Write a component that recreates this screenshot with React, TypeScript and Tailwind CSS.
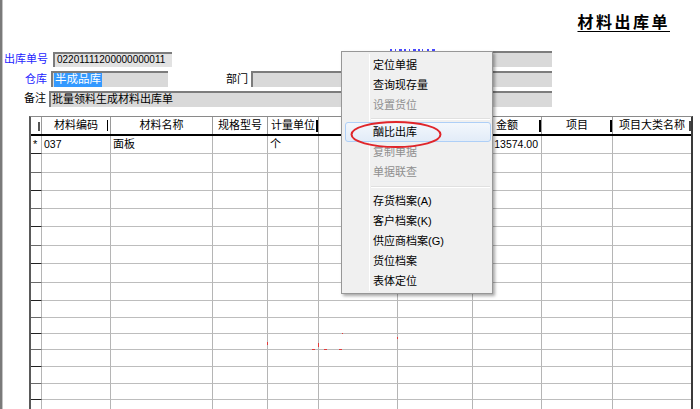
import React from 'react'

const FONT = "[font-family:'Liberation_Sans','Noto_Sans_CJK_SC',sans-serif]"

interface HeaderCell {
  text: string
  bar?: 'thin' | 'thick'
  align?: 'center' | 'left'
}

const headers: HeaderCell[] = [
  { text: '' },
  { text: '材料编码', bar: 'thin' },
  { text: '材料名称' },
  { text: '规格型号' },
  { text: '计量单位', bar: 'thick' },
  { text: '数量' },
  { text: '单价' },
  { text: '金额', bar: 'thick' },
  { text: '项目', bar: 'thick' },
  { text: '项目大类名称', align: 'left' },
]

// row heights in px, bottom line included
const rowHeights = [18, 19, 18, 18, 18, 19, 18, 19, 18, 17, 16, 16, 17, 17, 16, 17]

const firstRow = ['*', '037', '面板', '', '个', '', '', '13574.00', '', '']

const gridCols = 'grid grid-cols-[11px_69px_102px_55px_51px_79px_75px_69px_71px_1fr]'

// left-over pixels of the label hidden under the menu
const labelSliver = [
  [388, 2], [393, 1], [397, 3], [402, 2], [407, 1], [411, 3], [416, 2], [420, 1], [425, 2], [430, 3],
]

interface MenuItem {
  label: string
  disabled?: boolean
  active?: boolean
  separator?: number
}

const menuItems: MenuItem[] = [
  { label: '定位单据' },
  { label: '查询现存量' },
  { label: '设置货位', disabled: true },
  { label: '', separator: 7 },
  { label: '酗比出库', active: true },
  { label: '复制单据', disabled: true },
  { label: '单据联查', disabled: true },
  { label: '', separator: 9 },
  { label: '存货档案(A)' },
  { label: '客户档案(K)' },
  { label: '供应商档案(G)' },
  { label: '货位档案' },
  { label: '表体定位' },
]

function Field({ className, children }: { className: string; children?: React.ReactNode }) {
  return (
    <div
      className={`flex items-center bg-[#d9d9d9] border-t-2 border-l-2 border-t-[#7c7c7c] border-l-[#7c7c7c] overflow-hidden ${className}`}
    >
      {children}
    </div>
  )
}

function ContextMenu() {
  return (
    <div className="absolute left-[339px] top-[51px] w-[152px] h-[243px] bg-[#f0f0f0] border border-[#979797] shadow-[2px_2px_3px_rgba(0,0,0,0.35)] pt-[3px]">
      <div className="absolute left-[27px] top-[2px] bottom-[2px] w-px bg-[#e2e3e3] border-r border-white" />
      {menuItems.map((item, i) =>
        item.separator ? (
          <div key={i} className="relative flex items-center pl-[29px] pr-[2px]" style={{ height: item.separator }}>
            <div className="w-full h-px bg-[#e0e0e0] shadow-[0_1px_0_#ffffff]" />
          </div>
        ) : (
          <div key={i} className="relative h-[20px] flex items-center pl-[31px]">
            {item.active && (
              <div className="absolute left-[3px] right-[1px] top-0 bottom-0 rounded-[3px] border border-[#aecff7] bg-gradient-to-b from-[#f3f7fc] to-[#e2ecf8]" />
            )}
            <span
              className={`relative text-[11px] leading-none ${item.disabled ? 'text-[#8f8f8f]' : 'text-black'}`}
            >
              {item.label}
            </span>
          </div>
        )
      )}
    </div>
  )
}

export default function App() {
  return (
    <div
      className={`relative w-[700px] h-[409px] overflow-hidden bg-white border-l-2 border-[#7a7a7a] shadow-[inset_1px_0_0_#c4c4c4] ${FONT}`}
    >
      {/* title */}
      <div className="h-[51px] flex justify-end items-start pt-[15px] pr-[30px]">
        <span className="text-[16px] font-bold leading-none tracking-[2.5px] underline underline-offset-[3px] text-black">
          材料出库单
        </span>
      </div>

      {/* header fields */}
      <div className="flex items-center h-[16px] pr-[148px] text-[11px] leading-none">
        <span className="w-[46px] text-right text-[#1d1dff]">出库单号</span>
        <Field className="ml-[5px] w-[119px] h-[15px] bg-[#e2e2e2] border-t border-l">
          <span className="pl-[2px] text-[10px] text-black">02201111200000000011</span>
        </Field>
        <div className="flex-1" />
        <Field className="w-[115px] h-[16px]" />
      </div>

      <div className="flex items-center h-[16px] mt-[4px] pr-[148px] text-[11px] leading-none">
        <span className="w-[45px] text-right text-[#1d1dff]">仓库</span>
        <Field className="ml-[4px] w-[117px] h-[16px]">
          <span className="ml-[1px] px-[1px] py-[1px] bg-[#3399ff] text-white text-[11.5px]">半成品库</span>
        </Field>
        <span className="ml-[58px] text-black">部门</span>
        <Field className="ml-[3px] flex-1 h-[16px]" />
      </div>

      <div className="flex items-center h-[15px] mt-[4px] pr-[148px] text-[11px] leading-none">
        <span className="w-[44px] text-right text-black">备注</span>
        <Field className="ml-[3px] flex-1 h-[16px]">
          <span className="pl-[1px] text-black">批量领料生成材料出库单</span>
        </Field>
      </div>

      {/* table */}
      <div className="mt-[10px] ml-[27px] w-[664px] border-l-2 border-r-2 border-l-[#5a5a5a] border-r-[#3a3a3a] border-t border-t-[#8a8a8a] text-[11px] leading-none">
        <div className={`${gridCols} h-[19px] border-b-2 border-black`}>
          {headers.map((h, i) => (
            <div
              key={i}
              className={`relative flex items-center overflow-hidden whitespace-nowrap ${
                i < headers.length - 1 ? 'border-r border-[#9a9a9a]' : ''
              } ${h.align === 'left' ? 'pl-[6px]' : 'justify-center'}`}
            >
              {i === 0 ? (
                <div className="absolute right-[1px] top-[5px] w-[2px] h-[9px] bg-[#555]" />
              ) : (
                <span className="text-black">{h.text}</span>
              )}
              {h.bar === 'thin' && <div className="absolute right-[2px] top-[3px] h-[11px] w-px bg-black" />}
              {h.bar === 'thick' && <div className="absolute right-0 top-[3px] h-[12px] w-[2px] bg-black" />}
              {i === headers.length - 1 && (
                <div className="absolute right-0 top-[4px] h-[10px] w-[2px] bg-[#444]" />
              )}
            </div>
          ))}
        </div>

        {rowHeights.map((rh, r) => (
          <div key={r} className={gridCols} style={{ height: rh }}>
            {headers.map((_, c) => {
              const text = r === 0 ? firstRow[c] : ''
              const line =
                c === 0 ? (r % 2 === 0 ? 'border-b-[#222]' : 'border-b-[#6a6a6a]') : 'border-b-[#bdbdbd]'
              return (
                <div
                  key={c}
                  className={`flex items-center overflow-hidden whitespace-nowrap border-b ${line} ${
                    c < headers.length - 1 ? 'border-r border-r-[#b5b5b5]' : ''
                  } ${c === 7 ? 'justify-end pr-[3px]' : 'pl-[2px]'}`}
                >
                  {text && (
                    <span className={c === 1 || c === 7 ? 'text-[10.5px] text-black' : 'text-black'}>{text}</span>
                  )}
                </div>
              )
            })}
          </div>
        ))}
      </div>

      {/* blue remains of the date label above the menu */}
      {labelSliver.map(([x, w], i) => (
        <div key={i} className="absolute top-[49px] h-[2px] bg-[#4a4aff]" style={{ left: x, width: w }} />
      ))}

      {/* stray red marks */}
      <div className="absolute left-[265px] top-[342px] w-px h-[3px] bg-[#e23a3a]" />
      <div className="absolute left-[310px] top-[349px] w-[3px] h-px bg-[#e23a3a]" />
      <div className="absolute left-[316px] top-[343px] w-px h-[4px] bg-[#e23a3a]" />
      <div className="absolute left-[322px] top-[349px] w-[3px] h-px bg-[#e23a3a]" />
      <div className="absolute left-[337px] top-[349px] w-[3px] h-px bg-[#e23a3a]" />
      <div className="absolute left-[340px] top-[333px] w-px h-px bg-[#e23a3a]" />
      <div className="absolute left-[395px] top-[337px] w-px h-[2px] bg-[#e23a3a]" />

      <ContextMenu />

      {/* red highlight ellipse */}
      <svg className="absolute left-[346px] top-[119px]" width="96" height="31" viewBox="0 0 96 31">
        <ellipse cx="48" cy="15.5" rx="44.5" ry="12.5" fill="none" stroke="#e0252a" strokeWidth="2" />
      </svg>
    </div>
  )
}
